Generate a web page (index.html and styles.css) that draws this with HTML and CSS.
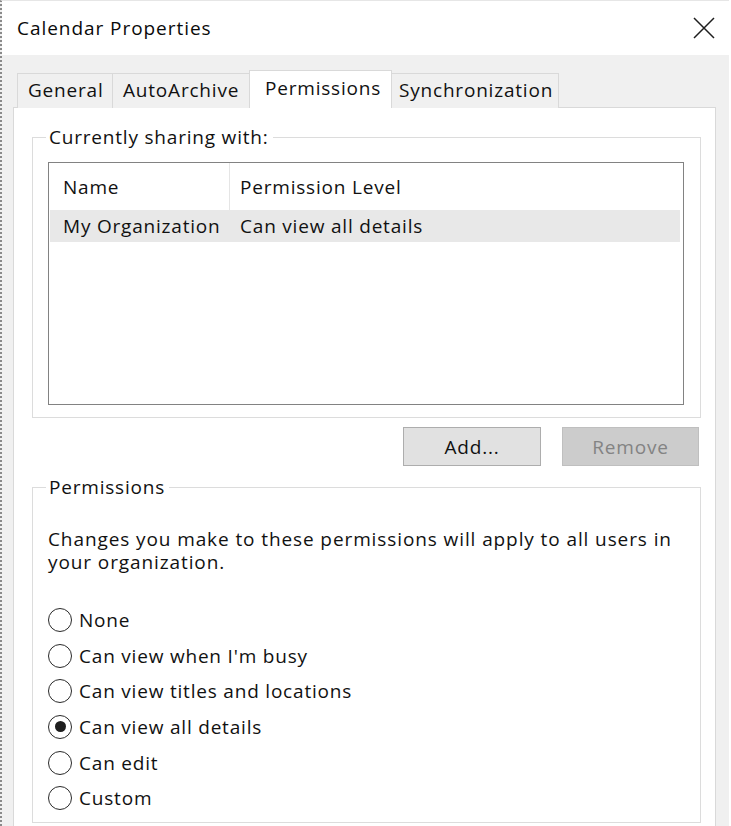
FILE: index.html
```html
<!DOCTYPE html>
<html lang="en">
<head>
<meta charset="utf-8">
<title>Calendar Properties</title>
<link rel="stylesheet" href="styles.css">
</head>
<body>
<div class="window">
  <div class="titlebar">
    <span class="title">Calendar Properties</span>
    <svg class="close" width="22" height="22" viewBox="0 0 22 22" aria-label="Close">
      <path d="M1 1 L21 21 M21 1 L1 21" stroke="#1e1e1e" stroke-width="1.5" fill="none"/>
    </svg>
  </div>
  <div class="client">
    <div class="tabs">
      <div class="tab tab-general">General</div>
      <div class="tab tab-auto">AutoArchive</div>
      <div class="tab tab-perm selected">Permissions</div>
      <div class="tab tab-sync">Synchronization</div>
    </div>
    <div class="panel">
      <fieldset class="group group-sharing">
        <legend>Currently sharing with:</legend>
        <div class="listbox">
          <div class="list-header">
            <div class="col col-name">Name</div>
            <div class="col col-level">Permission Level</div>
          </div>
          <div class="list-row selected-row">
            <div class="col col-name">My Organization</div>
            <div class="col col-level">Can view all details</div>
          </div>
        </div>
      </fieldset>
      <div class="buttons">
        <button class="btn btn-add">Add...</button>
        <button class="btn btn-remove" disabled>Remove</button>
      </div>
      <fieldset class="group group-perms">
        <legend>Permissions</legend>
        <p class="note">Changes you make to these permissions will apply to all users in your organization.</p>
        <div class="radios">
          <div class="radio"><span class="dot"></span><span>None</span></div>
          <div class="radio"><span class="dot"></span><span>Can view when I'm busy</span></div>
          <div class="radio"><span class="dot"></span><span>Can view titles and locations</span></div>
          <div class="radio checked"><span class="dot"></span><span>Can view all details</span></div>
          <div class="radio"><span class="dot"></span><span>Can edit</span></div>
          <div class="radio"><span class="dot"></span><span>Custom</span></div>
        </div>
      </fieldset>
    </div>
  </div>
</div>
</body>
</html>
```
FILE: styles.css
```css
* { box-sizing: border-box; }
html, body {
  margin: 0;
  padding: 0;
  background: #ffffff;
}
body {
  width: 731px;
  height: 826px;
  overflow: hidden;
  font-family: "Open Sans", "Noto Sans", sans-serif;
  font-size: 19px;
  letter-spacing: 0.8px;
  color: #111;
}
.window {
  width: 729px;
  height: 826px;
  border-left: 2px dotted #8a8a8a;
  border-top: 1px solid #e6e6e6;
  background: #f0f0f0;
}
.titlebar {
  height: 54px;
  background: #fff;
  display: flex;
  align-items: center;
  justify-content: space-between;
  padding: 0 14px 0 15px;
}
.title {
  font-size: 19px;
  letter-spacing: 0.95px;
  color: #0a0a0a;
  margin-top: -1px;
}
.close { display: block; margin-top: -1px; }
.client {
  padding: 18px 13px 0 11px;
}
.tabs {
  display: flex;
  height: 34px;
  padding-left: 4px;
  position: relative;
  z-index: 2;
}
.tab {
  height: 35px;
  border: 1px solid #d9d9d9;
  border-bottom: none;
  background: #f0f0f0;
  margin-right: -1px;
  line-height: 33px;
  padding: 0 10px;
  white-space: nowrap;
}
.tab-general { width: 96px; padding-left: 10px; }
.tab-auto { width: 140px; }
.tab-perm { width: 140px; }
.tab-sync { width: 170px; padding-left: 9px; }
.tab.selected {
  background: #fff;
  height: 38px;
  margin-top: -3px;
  margin-left: -2px;
  margin-right: -3px;
  width: 143px;
  padding-left: 15px;
  line-height: 34px;
  position: relative;
  z-index: 3;
}
.panel {
  background: #fff;
  border: 1px solid #d9d9d9;
  height: 760px;
  padding: 17px 14px 0 18px;
  position: relative;
  z-index: 1;
}
.group {
  margin: 0;
  border: 1px solid #dcdcdc;
  min-width: 0;
}
.group legend {
  padding: 0 4px 0 3px;
  margin-left: -2px;
  line-height: 24px;
  height: 24px;
}
.group-sharing {
  padding: 13px 16px 12px 15px;
}
.listbox {
  height: 243px;
  border: 1px solid #828282;
  background: #fff;
}
.list-header, .list-row {
  display: flex;
  align-items: center;
}
.list-header {
  height: 47px;
}
.list-header .col-name {
  border-right: 1px solid #e5e5e5;
  height: 100%;
  display: flex;
  align-items: center;
}
.col-name {
  width: 181px;
  padding-left: 14px;
  white-space: nowrap;
}
.col-level {
  padding-left: 10px;
  white-space: nowrap;
}
.list-row {
  height: 32px;
  margin: 0 3px 0 1px;
}
.selected-row {
  background: #e8e8e8;
}
.selected-row .col-name { width: 180px; padding-left: 13px; }
.buttons {
  display: flex;
  justify-content: flex-end;
  gap: 21px;
  margin-top: 9px;
  padding-right: 2px;
}
.btn {
  font: inherit;
  letter-spacing: inherit;
  height: 39px;
  margin: 0;
  padding: 0;
  border: 1px solid #adadad;
  background: #e1e1e1;
  color: #111;
}
.btn-add { width: 138px; }
.btn-remove {
  width: 137px;
  background: #cccccc;
  border-color: #bfbfbf;
  color: #838383;
}
.group-perms {
  margin-top: 9px;
  padding: 29px 16px 6px 15px;
}
.note {
  margin: 0;
  line-height: 23px;
  max-width: 640px;
  letter-spacing: 0.9px;
}
.radios {
  margin-top: 28px;
}
.radio {
  height: 35.7px;
  display: flex;
  align-items: center;
  gap: 7px;
}
.dot {
  width: 24px;
  height: 24px;
  border: 1.6px solid #2a2a2a;
  border-radius: 50%;
  display: flex;
  align-items: center;
  justify-content: center;
  flex: none;
}
.radio.checked .dot::after {
  content: "";
  width: 11px;
  height: 11px;
  border-radius: 50%;
  background: #1e1e1e;
}
```
